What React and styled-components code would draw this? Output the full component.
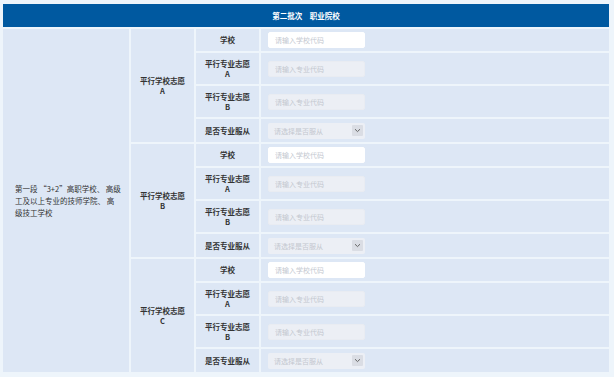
import styled, { createGlobalStyle } from 'styled-components';

const GlobalStyle = createGlobalStyle`
  html, body {
    margin: 0;
    padding: 0;
    background: #eef5fb;
  }
  body {
    font-family: 'Noto Sans CJK SC', 'Noto Sans', sans-serif;
  }
`;

const groups = ['A', 'B', 'C'];

const rows = [
    { label: '学校', kind: 'school', height: 22 },
    { label: '平行专业志愿', sub: 'A', kind: 'major', height: 31 },
    { label: '平行专业志愿', sub: 'B', kind: 'major', height: 31 },
    { label: '是否专业服从', kind: 'select', height: 23 },
];

const segmentLines = ['第一段 “3+2”高职学校、 高级', '工及以上专业的技师学院、 高', '级技工学校'];

function App() {
    return (
        <Page>
            <GlobalStyle />
            <Table>
                <colgroup>
                    <col style={{ width: 126 }} />
                    <col style={{ width: 63 }} />
                    <col style={{ width: 63 }} />
                    <col />
                </colgroup>
                <thead>
                    <tr>
                        <HeadCell colSpan={4}>第二批次　职业院校</HeadCell>
                    </tr>
                </thead>
                <tbody>
                    {groups.map((g, gi) =>
                        rows.map((r, ri) => (
                            <Row key={g + ri} $h={r.height}>
                                {gi === 0 && ri === 0 && (
                                    <SegmentCell rowSpan={12}>
                                        {segmentLines.map(l => (
                                            <SegmentLine key={l}>{l}</SegmentLine>
                                        ))}
                                    </SegmentCell>
                                )}
                                {ri === 0 && (
                                    <GroupCell rowSpan={4}>
                                        平行学校志愿
                                        <br />
                                        {g}
                                    </GroupCell>
                                )}
                                <LabelCell>
                                    {r.label}
                                    {r.sub && (
                                        <>
                                            <br />
                                            {r.sub}
                                        </>
                                    )}
                                </LabelCell>
                                <FieldCell>
                                    {r.kind === 'school' && <TextInput placeholder="请输入学校代码" />}
                                    {r.kind === 'major' && <TextInput disabled placeholder="请输入专业代码" />}
                                    {r.kind === 'select' && (
                                        <SelectBox>
                                            <span>请选择是否服从</span>
                                            <Chevron>
                                                <svg width="7" height="5" viewBox="0 0 7 5">
                                                    <path d="M1 1.2 L3.5 3.6 L6 1.2" fill="none" stroke="#666" strokeWidth="1" />
                                                </svg>
                                            </Chevron>
                                        </SelectBox>
                                    )}
                                </FieldCell>
                            </Row>
                        ))
                    )}
                </tbody>
            </Table>
        </Page>
    );
}

export default App;

const Page = styled.div`
    width: 614px;
    height: 377px;
    padding: 2px 0 0 1px;
    box-sizing: border-box;
    overflow: hidden;
`;

const Table = styled.table`
    width: 610px;
    border-collapse: separate;
    border-spacing: 2px;
    table-layout: fixed;
    font-size: 7.5px;
    color: #333;
`;

const HeadCell = styled.th`
    height: 23px;
    padding: 0;
    background: #0059a0;
    color: #fff;
    font-weight: 700;
    font-size: 7.5px;
    text-align: center;
`;

const Row = styled.tr`
    height: ${p => p.$h}px;
`;

const Cell = styled.td`
    padding: 0;
    background: #dde7f5;
    line-height: 10px;
`;

const SegmentCell = styled(Cell)`
    padding: 0 4px 0 12px;
    text-align: left;
    color: #333;
`;

const SegmentLine = styled.div`
    line-height: 12px;
    white-space: nowrap;
`;

const GroupCell = styled(Cell)`
    text-align: center;
    font-weight: 700;
    line-height: 10px;
`;

const LabelCell = styled(Cell)`
    text-align: center;
    font-weight: 700;
`;

const FieldCell = styled(Cell)`
    padding-left: 7px;
`;

const TextInput = styled.input`
    display: block;
    box-sizing: border-box;
    width: 97px;
    height: 16px;
    padding: 0 6px;
    border: 1px solid ${p => (p.disabled ? '#e9ecf2' : '#ffffff')};
    border-radius: 2px;
    background: ${p => (p.disabled ? '#eceff5' : '#ffffff')};
    font-family: inherit;
    font-size: 7px;
    outline: none;

    &::placeholder {
        color: #c3c7cf;
    }
`;

const SelectBox = styled.div`
    display: flex;
    align-items: center;
    justify-content: space-between;
    box-sizing: border-box;
    width: 97px;
    height: 16px;
    padding: 0 2px 0 6px;
    border-radius: 2px;
    background: #eceff5;
    color: #c3c7cf;
    font-size: 7px;
`;

const Chevron = styled.span`
    display: flex;
    align-items: center;
    justify-content: center;
    width: 11px;
    height: 11px;
    background: #dadde4;
    border-radius: 1px;
`;
